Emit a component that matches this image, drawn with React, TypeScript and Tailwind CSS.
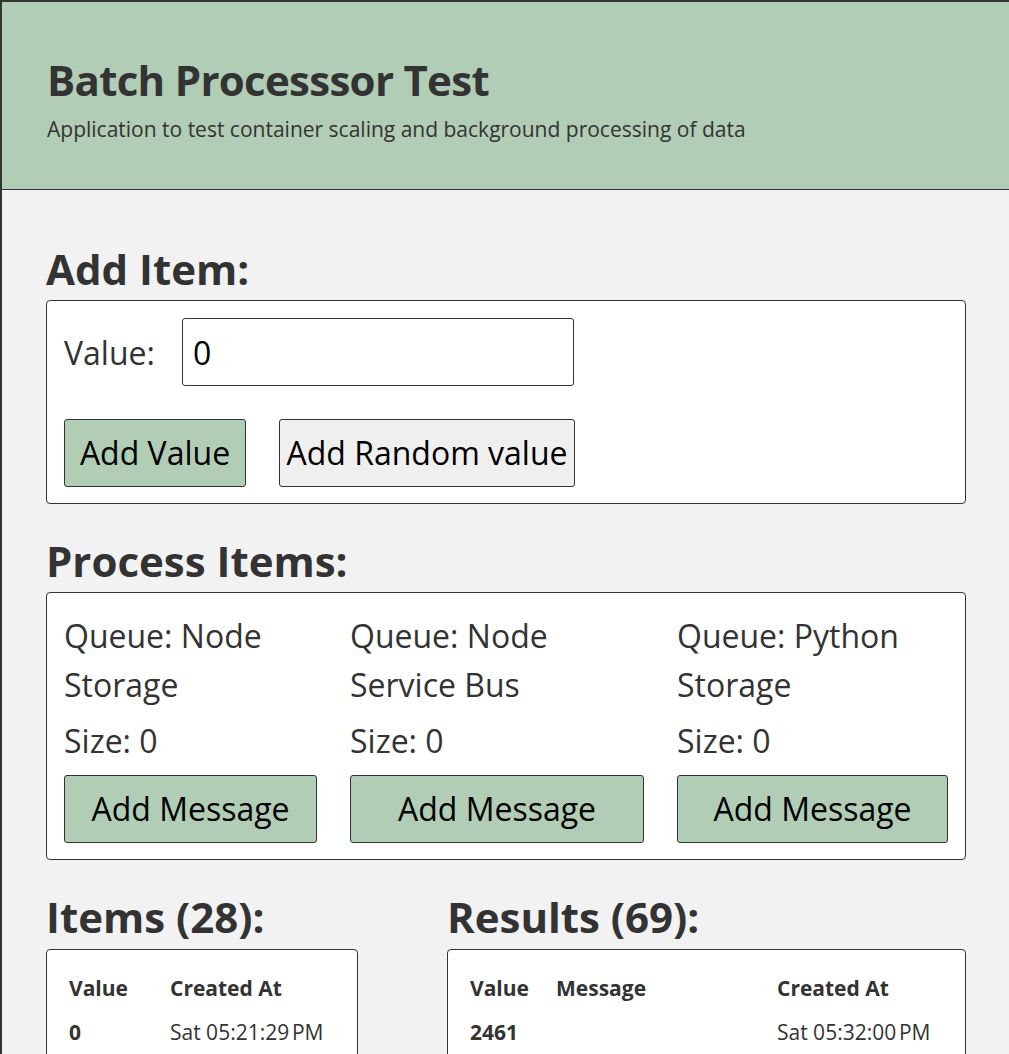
import React from "react";

const queues = [
  { name: "Queue: Node Storage", size: 0, w: "w-[253px]" },
  { name: "Queue: Node Service Bus", size: 0, w: "w-[294px]" },
  { name: "Queue: Python Storage", size: 0, w: "w-[271px]" },
];

const NNBSP = "\u202F";

export default function App() {
  return (
    <div className="min-h-screen bg-[#f2f2f2] border-t-2 border-l-2 border-[#333] font-['Open_Sans',sans-serif] text-[#333]">
      {/* Header */}
      <header className="h-[188px] bg-[#b1cdb5] border-b border-[#333] pl-[45px] pt-[50px]">
        <h1 className="text-[42px] leading-[56px] font-bold tracking-[-0.7px]">Batch Processsor Test</h1>
        <p className="mt-[7px] text-[21px] leading-[28px]">
          Application to test container scaling and background processing of data
        </p>
      </header>

      <main className="pl-[44px] pr-[43px] pt-[54px] pb-10">
        {/* Add item */}
        <h2 className="text-[42px] leading-[50px] font-bold mb-[6px]">Add Item:</h2>
        <section className="bg-white border border-[#333] rounded-[4px] px-[17px] pt-[17px] pb-[16px]">
          <div className="flex items-center h-[68px]">
            <label className="w-[118px] text-[32px] leading-[49px]">Value:</label>
            <input
              readOnly
              value="0"
              className="w-[392px] h-[68px] bg-white border border-[#333] rounded-[3px] px-[10px] text-[32px] text-black outline-none"
            />
          </div>
          <div className="flex gap-[33px] mt-[33px]">
            <button className="w-[182px] h-[68px] bg-[#b1cdb5] border border-[#333] rounded-[3px] text-[32px] text-black">
              Add Value
            </button>
            <button className="w-[296px] h-[68px] bg-[#efefef] border border-[#333] rounded-[3px] text-[32px] text-black whitespace-nowrap">
              Add Random value
            </button>
          </div>
        </section>

        {/* Process items */}
        <h2 className="mt-[32px] text-[42px] leading-[50px] font-bold mb-[6px]">Process Items:</h2>
        <section className="bg-white border border-[#333] rounded-[4px] px-[17px] pt-[18px] pb-[16px]">
          <div className="flex justify-between">
            {queues.map((q) => (
              <div key={q.name} className={`${q.w} flex flex-col`}>
                <p className="text-[32px] leading-[49px]">{q.name}</p>
                <p className="mt-[7px] text-[32px] leading-[49px]">Size: {q.size}</p>
                <button className="mt-[10px] h-[68px] w-full bg-[#b1cdb5] border border-[#333] rounded-[3px] text-[32px] text-black">
                  Add Message
                </button>
              </div>
            ))}
          </div>
        </section>

        {/* Items / Results */}
        <div className="mt-[32px] flex justify-between">
          <div className="w-[312px]">
            <h2 className="text-[42px] leading-[50px] font-bold mb-[7px]">Items (28):</h2>
            <section className="bg-white border border-[#333] rounded-[4px] pl-[22px] pt-[16px] pb-4 text-[21px] leading-[44px]">
              <div className="flex font-bold">
                <span className="w-[101px]">Value</span>
                <span>Created At</span>
              </div>
              <div className="flex">
                <span className="w-[101px] font-bold">0</span>
                <span>Sat 05:21:29{NNBSP}PM</span>
              </div>
            </section>
          </div>
          <div className="w-[519px]">
            <h2 className="text-[42px] leading-[50px] font-bold mb-[7px]">Results (69):</h2>
            <section className="bg-white border border-[#333] rounded-[4px] pl-[22px] pt-[16px] pb-4 text-[21px] leading-[44px]">
              <div className="flex font-bold">
                <span className="w-[86px]">Value</span>
                <span className="w-[221px]">Message</span>
                <span>Created At</span>
              </div>
              <div className="flex">
                <span className="w-[86px] font-bold">2461</span>
                <span className="w-[221px]"></span>
                <span>Sat 05:32:00{NNBSP}PM</span>
              </div>
            </section>
          </div>
        </div>
      </main>
    </div>
  );
}
